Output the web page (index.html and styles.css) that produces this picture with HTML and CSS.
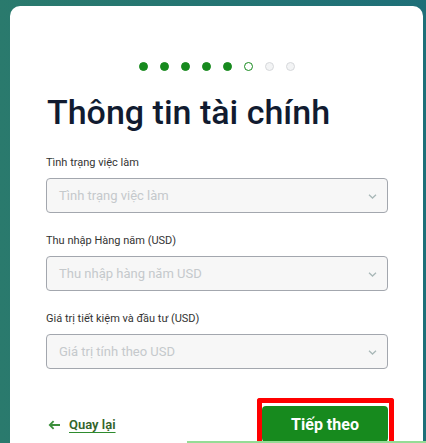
FILE: index.html
```html
<html>
<head>
    <meta charset="UTF-8">
    <link rel="stylesheet" href="styles.css">
    <title>Thông tin tài chính</title>
</head>
<body>
    <div class="card">
        <!-- step dots -->
        <div class="steps">
            <span class="dot done"></span>
            <span class="dot done"></span>
            <span class="dot done"></span>
            <span class="dot done"></span>
            <span class="dot done"></span>
            <span class="dot current"></span>
            <span class="dot"></span>
            <span class="dot"></span>
        </div>

        <h1 class="title">Thông tin tài chính</h1>

        <div class="field">
            <label class="label">Tình trạng việc làm</label>
            <div class="select">
                <span class="placeholder">Tình trạng việc làm</span>
                <svg class="chevron" width="9" height="5" viewBox="0 0 9 5"><path d="M1 0.8 L4.5 4 L8 0.8" fill="none" stroke="#a9b8b8" stroke-width="1.3"/></svg>
            </div>
        </div>

        <div class="field">
            <label class="label">Thu nhập Hàng năm (USD)</label>
            <div class="select">
                <span class="placeholder">Thu nhập hàng năm USD</span>
                <svg class="chevron" width="9" height="5" viewBox="0 0 9 5"><path d="M1 0.8 L4.5 4 L8 0.8" fill="none" stroke="#a9b8b8" stroke-width="1.3"/></svg>
            </div>
        </div>

        <div class="field">
            <label class="label">Giá trị tiết kiệm và đầu tư (USD)</label>
            <div class="select">
                <span class="placeholder">Giá trị tính theo USD</span>
                <svg class="chevron" width="9" height="5" viewBox="0 0 9 5"><path d="M1 0.8 L4.5 4 L8 0.8" fill="none" stroke="#a9b8b8" stroke-width="1.3"/></svg>
            </div>
        </div>

        <div class="footer">
            <a class="back" href="#">
                <svg class="arrow" width="13" height="10" viewBox="0 0 13 10"><path d="M12 5 H1.8 M5.6 1.2 L1.8 5 L5.6 8.8" fill="none" stroke="#3b8f3b" stroke-width="1.8"/></svg>
                <span class="back-text">Quay lại</span>
            </a>
            <div class="highlight">
                <button class="next">Tiếp theo</button>
            </div>
        </div>
    </div>
    <div class="bottom-line"></div>
</body>
</html>
```

FILE: styles.css
```css
*{
    box-sizing: border-box;
}
body{
    margin: 0;
    height: 443px;
    overflow: hidden;
    background: linear-gradient(90deg, #2a7a6d, #1e6f78);
    font-family: Roboto, "Noto Sans", sans-serif;
}
.card{
    margin: 6px 3px 0 10px;
    background: #fff;
    border-radius: 10px;
    padding: 56px 35px 40px 36px;
}
.steps{
    display: flex;
    justify-content: center;
    gap: 12px;
}
.dot{
    width: 9px;
    height: 9px;
    border-radius: 50%;
    background: #f3f4f5;
    border: 1px solid #d6d8db;
}
.dot.done{
    background: #178a1e;
    border-color: #178a1e;
}
.dot.current{
    background: #fff;
    border: 1.5px solid #178a1e;
}
.title{
    margin: 21px 0 22px 1px;
    font-size: 34px;
    line-height: 41px;
    font-weight: 500;
    color: #111b30;
}
.field{
    margin-bottom: 20px;
}
.label{
    display: block;
    font-size: 11px;
    line-height: 16px;
    color: #333333;
    margin-bottom: 7px;
}
.select{
    height: 35px;
    border: 1px solid #a3a7ae;
    border-radius: 4px;
    background: #f7f7f7;
    display: flex;
    align-items: center;
    justify-content: space-between;
    padding: 0 10px 0 12px;
}
.placeholder{
    font-size: 13px;
    color: #c5c9cc;
}
.chevron{
    margin-top: 2px;
}
.footer{
    margin-top: 29px;
    display: flex;
    justify-content: space-between;
    align-items: flex-end;
}
.back{
    display: flex;
    align-items: center;
    gap: 8px;
    margin-left: 2px;
    margin-bottom: 10px;
    text-decoration: none;
}
.back-text{
    font-size: 13px;
    font-weight: 600;
    color: #34642a;
    text-decoration: underline;
    text-decoration-color: #2e8b2e;
    text-underline-offset: 3px;
}
.highlight{
    border: 5px solid #ff0000;
    border-bottom: none;
    border-radius: 3px 3px 0 0;
    padding: 3px 1px 0 0;
    margin-right: -6px;
}
.next{
    display: block;
    width: 126px;
    height: 36px;
    border: none;
    border-radius: 4px;
    background: #178a1e;
    color: #fff;
    font-family: Roboto, "Noto Sans", sans-serif;
    font-size: 16px;
    font-weight: 700;
}
.bottom-line{
    position: fixed;
    left: 187px;
    right: 0;
    bottom: 0;
    height: 2px;
    background: #95dc95;
}
```
